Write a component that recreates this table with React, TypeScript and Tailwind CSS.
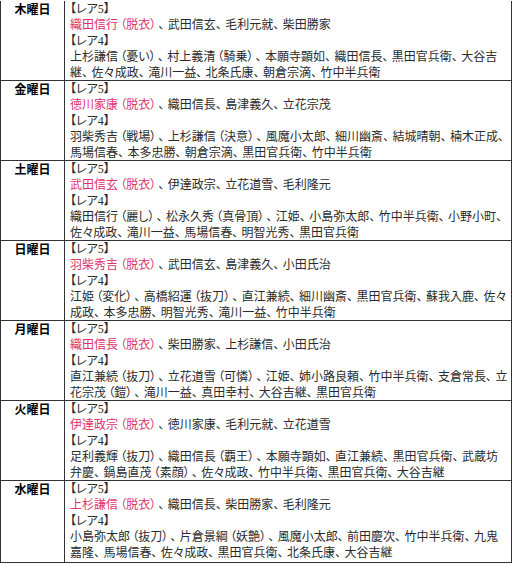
import React from 'react';

interface DayRow {
  day: string;
  star: string;
  rare5: string;
  rare4: string[];
}

const rows: DayRow[] = [
  {
    day: '木曜日',
    star: '織田信行（脱衣）',
    rare5: '、武田信玄、毛利元就、柴田勝家',
    rare4: [
      '上杉謙信（憂い）、村上義清（騎乗）、本願寺顕如、織田信長、黒田官兵衛、大谷吉',
      '継、佐々成政、滝川一益、北条氏康、朝倉宗滴、竹中半兵衛',
    ],
  },
  {
    day: '金曜日',
    star: '徳川家康（脱衣）',
    rare5: '、織田信長、島津義久、立花宗茂',
    rare4: [
      '羽柴秀吉（戦場）、上杉謙信（決意）、風魔小太郎、細川幽斎、結城晴朝、楠木正成、',
      '馬場信春、本多忠勝、朝倉宗滴、黒田官兵衛、竹中半兵衛',
    ],
  },
  {
    day: '土曜日',
    star: '武田信玄（脱衣）',
    rare5: '、伊達政宗、立花道雪、毛利隆元',
    rare4: [
      '織田信行（麗し）、松永久秀（真骨頂）、江姫、小島弥太郎、竹中半兵衛、小野小町、',
      '佐々成政、滝川一益、馬場信春、明智光秀、黒田官兵衛',
    ],
  },
  {
    day: '日曜日',
    star: '羽柴秀吉（脱衣）',
    rare5: '、武田信玄、島津義久、小田氏治',
    rare4: [
      '江姫（変化）、高橋紹運（抜刀）、直江兼続、細川幽斎、黒田官兵衛、蘇我入鹿、佐々',
      '成政、本多忠勝、明智光秀、滝川一益、竹中半兵衛',
    ],
  },
  {
    day: '月曜日',
    star: '織田信長（脱衣）',
    rare5: '、柴田勝家、上杉謙信、小田氏治',
    rare4: [
      '直江兼続（抜刀）、立花道雪（可憐）、江姫、姉小路良頼、竹中半兵衛、支倉常長、立',
      '花宗茂（鎧）、滝川一益、真田幸村、大谷吉継、黒田官兵衛',
    ],
  },
  {
    day: '火曜日',
    star: '伊達政宗（脱衣）',
    rare5: '、徳川家康、毛利元就、立花道雪',
    rare4: [
      '足利義輝（抜刀）、織田信長（覇王）、本願寺顕如、直江兼続、黒田官兵衛、武蔵坊',
      '弁慶、鍋島直茂（素顔）、佐々成政、竹中半兵衛、黒田官兵衛、大谷吉継',
    ],
  },
  {
    day: '水曜日',
    star: '上杉謙信（脱衣）',
    rare5: '、織田信長、柴田勝家、毛利隆元',
    rare4: [
      '小島弥太郎（抜刀）、片倉景綱（妖艶）、風魔小太郎、前田慶次、竹中半兵衛、九鬼',
      '嘉隆、馬場信春、佐々成政、黒田官兵衛、北条氏康、大谷吉継',
    ],
  },
];

// punctuation is set half width by palt, then opened up a little like the original
const fmt = (text: string) =>
  text.split(/([（）、])/).map((part, i) => {
    if (part === '、') {
      return (
        <span key={i} className="tracking-[3.4px]">
          、
        </span>
      );
    }
    if (part === '（') {
      return (
        <span key={i} className="ml-[2.2px]">
          （
        </span>
      );
    }
    if (part === '）') {
      return (
        <span key={i} className="tracking-[2.2px]">
          ）
        </span>
      );
    }
    return part;
  });

export default function App() {
  return (
    <div className="w-[512px] h-[565px] bg-white pt-px">
      <div className="w-[512px] border-x border-[#333]">
        {rows.map((row, i) => (
          <div
            key={row.day}
            className={`flex border-b border-[#333] ${i === rows.length - 1 ? 'h-[82px]' : 'h-[80px]'}`}
          >
            <div className="w-[64px] shrink-0 border-r border-[#333] text-center text-[12px] leading-[16px] font-bold text-black [font-family:'Noto_Sans_CJK_JP',sans-serif]">
              {row.day}
            </div>
            <div className="flex-1 pl-[5px] text-[12px] leading-[16px] text-[#2b2b2b] [font-feature-settings:'palt'] [font-family:'Liberation_Serif','Noto_Sans_CJK_JP',serif]">
              <div className="whitespace-nowrap">【レア5】</div>
              <div className="whitespace-nowrap">
                <span className="text-[#e2336d]">{fmt(row.star)}</span>
                {fmt(row.rare5)}
              </div>
              <div className="whitespace-nowrap">【レア4】</div>
              {row.rare4.map((line) => (
                <div key={line} className="whitespace-nowrap">
                  {fmt(line)}
                </div>
              ))}
            </div>
          </div>
        ))}
      </div>
    </div>
  );
}
